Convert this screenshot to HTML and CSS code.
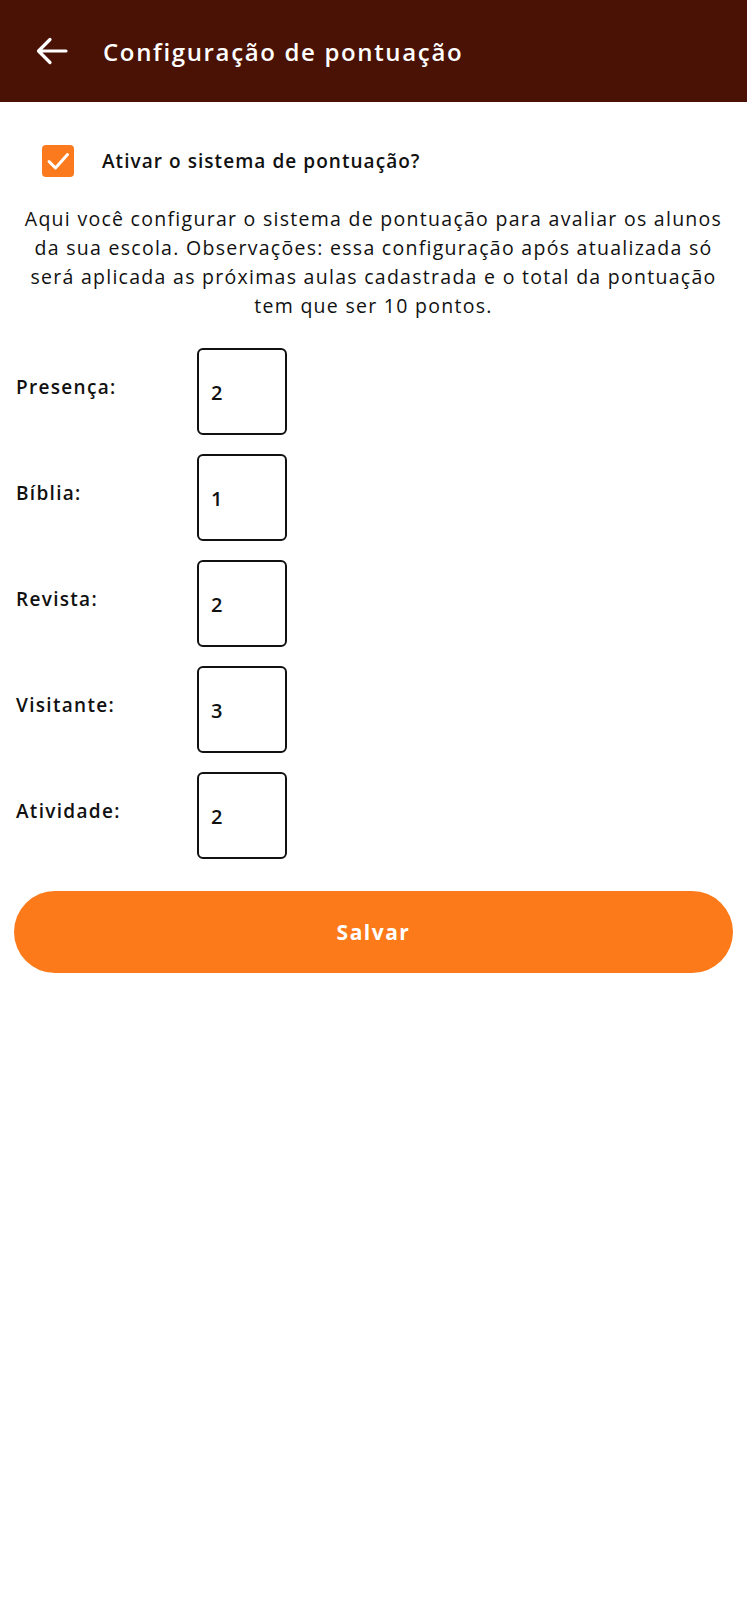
FILE: index.html
```html
<!DOCTYPE html>
<html lang="pt-BR">
<head>
<meta charset="utf-8">
<title>Configuração de pontuação</title>
<link rel="stylesheet" href="styles.css">
</head>
<body>
<header class="appbar">
  <svg class="back" width="32" height="28" viewBox="0 0 32 28" aria-hidden="true">
    <path d="M30 14H3M14 2.5L2.5 14L14 25.5" fill="none" stroke="#fff" stroke-width="3.2" stroke-linecap="round" stroke-linejoin="round"/>
  </svg>
  <h1 class="title">Configuração de pontuação</h1>
</header>
<main class="content">
  <label class="check-row">
    <span class="checkbox">
      <svg width="32" height="32" viewBox="0 0 32 32" aria-hidden="true">
        <path d="M7 16.5L13.5 23L25.5 9.5" fill="none" stroke="#fff" stroke-width="3" stroke-linecap="round" stroke-linejoin="round"/>
      </svg>
    </span>
    <span class="check-label">Ativar o sistema de pontuação?</span>
  </label>
  <p class="intro">Aqui você configurar o sistema de pontuação para avaliar os alunos da sua escola. Observações: essa configuração após atualizada só será aplicada as próximas aulas cadastrada e o total da pontuação tem que ser 10 pontos.</p>
  <div class="fields">
    <div class="field"><span class="field-label">Presença:</span><div class="box">2</div></div>
    <div class="field"><span class="field-label">Bíblia:</span><div class="box">1</div></div>
    <div class="field"><span class="field-label">Revista:</span><div class="box">2</div></div>
    <div class="field"><span class="field-label">Visitante:</span><div class="box">3</div></div>
    <div class="field"><span class="field-label">Atividade:</span><div class="box">2</div></div>
  </div>
  <button class="save">Salvar</button>
</main>
</body>
</html>
```
FILE: styles.css
```css
* { box-sizing: border-box; }
html, body { margin: 0; padding: 0; background: #fff; }
body { font-family: "Open Sans", "Noto Sans", sans-serif; color: #111; }

.appbar {
  height: 102px;
  background: #4a1204;
  display: flex;
  align-items: center;
  padding-left: 36px;
}
.back { display: block; flex: none; }
.title {
  margin: 0 0 0 35px;
  color: #fff;
  font-size: 24px;
  font-weight: 600;
  letter-spacing: 1.65px;
}

.content { padding: 0 14px; }

.check-row {
  display: flex;
  align-items: center;
  margin-top: 43px;
  padding-left: 28px;
}
.checkbox {
  width: 32px; height: 32px;
  border-radius: 4px;
  background: #fb7a1e;
  display: block;
  flex: none;
}
.checkbox svg { display: block; }
.check-label {
  margin-left: 28px;
  font-size: 19px;
  font-weight: 600;
  letter-spacing: 1.05px;
  color: #111;
}

.intro {
  margin: 27px 6px 0;
  text-align: center;
  font-size: 19.5px;
  line-height: 29px;
  letter-spacing: 1.28px;
  color: #111;
}

.fields {
  display: flex;
  flex-direction: column;
  gap: 19px;
  margin-top: 28px;
}
.field {
  display: flex;
  align-items: center;
}
.field-label {
  width: 183px;
  padding-left: 2px;
  font-size: 19px;
  font-weight: 600;
  letter-spacing: 1.3px;
  margin-bottom: 10px;
}
.box {
  width: 90px;
  height: 87px;
  border: 2px solid #111;
  border-radius: 6px;
  display: flex;
  align-items: center;
  padding-left: 12px;
  padding-top: 2px;
  font-size: 20px;
  font-weight: 600;
}

.save {
  display: block;
  width: 100%;
  height: 82px;
  margin-top: 32px;
  border: none;
  border-radius: 41px;
  background: #fd7a1b;
  color: #fff;
  font-family: inherit;
  font-size: 21px;
  font-weight: 700;
  letter-spacing: 1.5px;
}
```
